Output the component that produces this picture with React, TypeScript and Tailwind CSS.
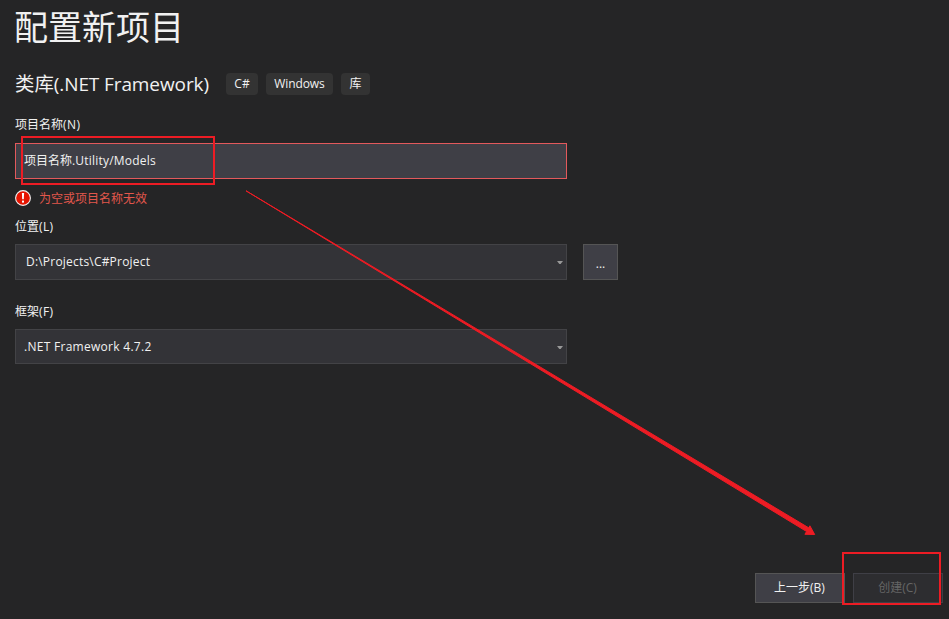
import type { ReactNode } from 'react';

function Tag({ className, children }: { className: string; children: ReactNode }) {
  return (
    <span className={`flex h-[22px] items-center justify-center rounded-[4px] bg-[#333333] text-[12px] ${className}`}>
      {children}
    </span>
  );
}

function Label({ className, text, suffix }: { className: string; text: string; suffix: string }) {
  return (
    <div className={`flex h-[18px] items-center text-[12px] leading-[18px] ${className}`}>
      <span>{text}</span>
      <span className="tracking-[0.4px]">{suffix}</span>
    </div>
  );
}

function Combo({ className, children }: { className: string; children: ReactNode }) {
  return (
    <div className={`flex w-[552px] items-center justify-between border border-[#434346] bg-[#333337] pr-[3px] text-[12px] ${className}`}>
      {children}
      <svg width="6" height="3" viewBox="0 0 6 3" className="mt-px">
        <path d="M0 0H6L3.6 3H2.4Z" fill="#999999" />
      </svg>
    </div>
  );
}

export default function App() {
  return (
    <div className="relative flex h-[619px] w-[949px] flex-col overflow-hidden bg-[#252526] pl-[15px] font-['Open_Sans','Noto_Sans_CJK_SC',sans-serif] whitespace-nowrap text-[#f1f1f1]">
      <h1 className="mt-[2px] -ml-px h-[50px] text-[34px] leading-[50px] font-normal">配置新项目</h1>

      <div className="mt-[20px] flex h-[24px] items-center">
        <h2 className="flex w-[211px] items-center text-[19.4px] leading-[24px]">
          <span>类库</span>
          <span className="text-[19px] font-medium tracking-[-0.1px]">(.NET Framework)</span>
        </h2>
        <div className="flex gap-2">
          <Tag className="w-[32px]">C#</Tag>
          <Tag className="w-[67px] tracking-[-0.1px]">Windows</Tag>
          <Tag className="w-[29px]">库</Tag>
        </div>
      </div>

      <Label className="mt-[20px]" text="项目名称" suffix="(N)" />
      <div className="mt-[9px] flex h-[36px] w-[552px] items-center border border-[#e3595c] bg-[#3f3f46] pl-2 text-[12px]">
        <span>项目名称</span>
        <span className="tracking-[0.2px]">.Utility/Models</span>
      </div>

      <div className="mt-[10px] flex h-[18px] items-center gap-2 text-[12px] text-[#e2574c]">
        <svg width="16" height="16" viewBox="0 0 16 16">
          <circle cx="8" cy="8" r="7.4" fill="#e51400" stroke="#f1f1f1" strokeWidth="1.1" />
          <path d="M6.9 3H9.1L8.8 9.3H7.2Z" fill="#fff" />
          <rect x="7" y="10.6" width="2" height="2" fill="#fff" />
        </svg>
        <span className="pt-[2px]">为空或项目名称无效</span>
      </div>

      <Label className="mt-[11px]" text="位置" suffix="(L)" />
      <div className="mt-[8px] flex gap-4">
        <Combo className="h-[36px] pl-[10px]">
          <span className="tracking-[0.2px]">D:\Projects\C#Project</span>
        </Combo>
        <button className="h-[36px] w-[35px] border border-[#555555] bg-[#3f3f46] pt-[3px] text-[12px]">...</button>
      </div>

      <Label className="mt-[23px]" text="框架" suffix="(F)" />
      <Combo className="mt-[8px] h-[35px] pl-2">
        <span className="tracking-[0.28px]">.NET Framework 4.7.2</span>
      </Combo>

      <div className="mt-auto mr-[6px] mb-4 flex justify-end gap-2 text-[12px]">
        <button className="h-[30px] w-[90px] border border-[#555555] bg-[#3f3f46] pr-px">上一步(B)</button>
        <button className="h-[30px] w-[90px] border border-[#3f3f46] bg-[#2d2d30] pr-px text-[#656565]">创建(C)</button>
      </div>

      <svg className="pointer-events-none absolute inset-0" width="949" height="619" viewBox="0 0 949 619">
        <g fill="none" stroke="#ed1c24" strokeWidth="2">
          <rect x="22" y="137" width="192" height="47" />
          <rect x="843" y="553" width="97" height="51" />
        </g>
        <path d="M246 190.8L808.7 527.8L809.9 525.8L814.7 534.5L804.9 534.3L806.6 531.5Z" fill="#ed1c24" stroke="#ed1c24" strokeWidth="1" />
      </svg>
    </div>
  );
}
